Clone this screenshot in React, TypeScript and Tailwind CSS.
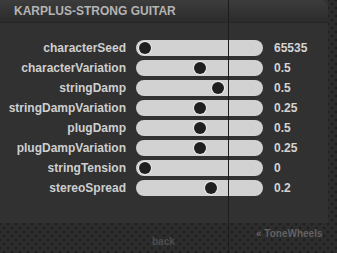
const params = [
  { name: "characterSeed", value: "65535", pos: 0 },
  { name: "characterVariation", value: "0.5", pos: 0.5 },
  { name: "stringDamp", value: "0.5", pos: 0.67 },
  { name: "stringDampVariation", value: "0.25", pos: 0.5 },
  { name: "plugDamp", value: "0.5", pos: 0.5 },
  { name: "plugDampVariation", value: "0.25", pos: 0.5 },
  { name: "stringTension", value: "0", pos: 0 },
  { name: "stereoSpread", value: "0.2", pos: 0.61 },
];

function Slider({ pos }: { pos: number }) {
  // knob travels between 3px and 112px inside the 127px track
  const left = 3 + pos * 109;
  return (
    <div className="relative h-4 w-[127px] rounded-full bg-[#d2d2d2]">
      <div
        className="absolute top-[2px] h-3 w-3 rounded-full bg-[#1f1f1f] ring-1 ring-[#e8e8e8]"
        style={{ left }}
      />
    </div>
  );
}

export default function App() {
  return (
    <div
      className="relative w-[337px] h-[253px] overflow-hidden bg-[#2d2d2d] bg-[image:radial-gradient(circle,#1f1f1f_1px,transparent_1.8px),radial-gradient(circle,#1f1f1f_1px,transparent_1.8px)] bg-size-[8px_8px] bg-position-[0_0,4px_4px]"
      style={{ fontFamily: '"Liberation Sans", Arial, sans-serif' }}
    >
      <div className="w-[328px] h-[223px] bg-[#313131]">
        {/* header */}
        <div className="h-[23px] rounded-tr-[8px] bg-gradient-to-b from-[#3c3c3c] to-[#2b2b2b] border-b border-[#262626] pl-[14px] flex items-center">
          <span className="text-[12px] font-bold text-[#b4b4b4]">KARPLUS-STRONG GUITAR</span>
        </div>

        {/* parameters */}
        <div className="pt-[17px] flex flex-col gap-1">
          {params.map((p) => (
            <div key={p.name} className="flex items-center h-4">
              <div className="w-[126px] text-right text-[12px] font-bold text-[#cfcfcf] leading-none">{p.name}</div>
              <div className="ml-[10px]">
                <Slider pos={p.pos} />
              </div>
              <div className="ml-[11px] text-[12px] font-bold text-[#d4d4d4] leading-none">{p.value}</div>
            </div>
          ))}
        </div>
      </div>

      {/* footer links */}
      <div className="relative h-[30px]">
        <span className="absolute left-[152px] top-[11px] text-[10px] font-bold text-[#4e4e4e]">back</span>
        <span className="absolute left-[256px] top-[3px] text-[10px] font-bold text-[#626262]">« ToneWheels</span>
      </div>

      {/* guide line */}
      <div className="absolute left-[228px] top-0 bottom-0 w-px bg-[#1c1c1c]" />
    </div>
  );
}
